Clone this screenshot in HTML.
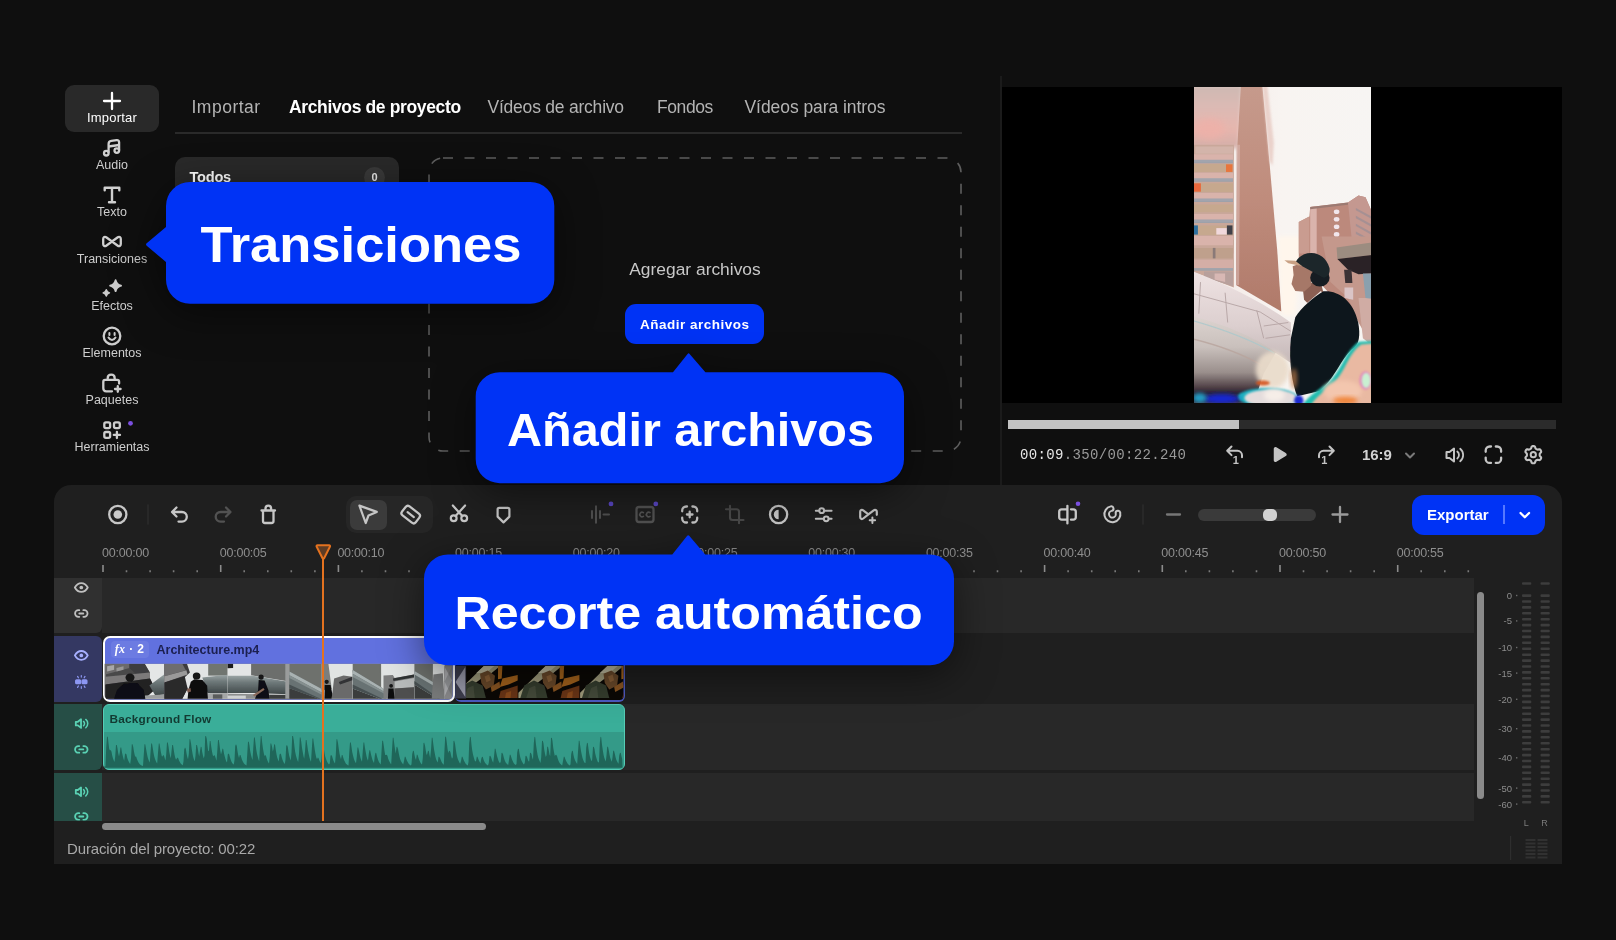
<!DOCTYPE html>
<html lang="es">
<head>
<meta charset="utf-8">
<title>Editor de vídeo</title>
<style>
*{box-sizing:border-box;margin:0;padding:0}
html,body{width:1616px;height:940px;overflow:hidden;background:#0f0f0f}
body{font-family:"Liberation Sans",sans-serif;color:#cfcfcf;position:relative}
.abs{position:absolute}
#root{position:absolute;left:0;top:0;width:1616px;height:940px;will-change:transform;transform:translateZ(0)}
svg{display:block;overflow:visible}
/* sidebar */
.sb{position:absolute;left:52px;width:120px;text-align:center;font-size:12.5px;color:#cecece;line-height:14px;white-space:nowrap}
.sb svg{margin:0 auto}
#imp{position:absolute;left:65px;top:85px;width:94px;height:47px;border-radius:9px;background:#292929}
/* tabs */
.tab{position:absolute;top:96.700px;font-size:17.500px;line-height:20px;color:#b4b4b4;white-space:nowrap}
.tab.on{color:#fff;font-weight:bold}
#tabline{position:absolute;left:175px;top:132.200px;width:787px;height:1.600px;background:#2a2a2a}
#todos{position:absolute;left:175px;top:157px;width:224px;height:40px;border-radius:10px;background:#292929}
#todos b{position:absolute;left:14.500px;top:11.500px;font-size:14.600px;letter-spacing:-.25px;color:#fff}
#todos i{position:absolute;right:14px;top:9.500px;width:21px;height:21px;border-radius:50%;background:#3a3a3a;font-style:normal;font-weight:bold;font-size:11px;color:#eee;text-align:center;line-height:21px}
#agregar{position:absolute;left:428px;width:534px;top:258.600px;text-align:center;font-size:17.400px;line-height:20px;color:#c8c8c8}
#addbtn{position:absolute;left:625.400px;top:304px;width:138.600px;height:40px;border-radius:11px;background:#0033f5;color:#fff;font-weight:bold;font-size:13.500px;letter-spacing:.5px;text-align:center;line-height:41px}
/* callouts */
.co{position:absolute;background:#0033f5;border-radius:24px;color:#fff;font-weight:bold;text-align:center;white-space:nowrap}
/* preview */
#pv{position:absolute;left:1002px;top:87px;width:560px;height:316px;background:#000}
#pbar{position:absolute;left:1008px;top:419.600px;width:548px;height:9.400px;background:#2b2b2b}
#pbar div{width:231px;height:9.400px;background:#c2c2c2}
#tc{position:absolute;left:1020px;top:447px;font-family:"Liberation Mono",monospace;font-size:14px;line-height:16px;color:#9a9a9a;white-space:nowrap;letter-spacing:.35px}
#tc b{color:#e6e6e6;font-weight:normal}
/* timeline */
#tl{position:absolute;left:54px;top:484.600px;width:1508px;height:379.400px;background:#1f1f1f;border-radius:17px 17px 0 0}
.rl{position:absolute;top:546.300px;font-size:12.500px;line-height:14px;color:#8e8e8e;white-space:nowrap;letter-spacing:-.22px}
.trk{position:absolute;left:102px;width:1372px;background:#282828}
.th{position:absolute;left:54px;width:48px}
</style>
</head>
<body>
<div id="root">
<!-- SIDEBAR -->
<div id="imp"></div>
<div id="sidebar">
<div class="sb" style="top:92px;color:#fff"><svg width="18" height="18" viewBox="0 0 18 18"><path d="M9 1v16M1 9h16" stroke="#fff" stroke-width="2.3" stroke-linecap="round" fill="none"/></svg><div style="margin-top:1px;font-size:13px;letter-spacing:.2px">Importar</div></div>
<div class="sb" style="top:139px"><svg width="20" height="18" viewBox="0 0 20 18"><g fill="none" stroke="#d0d0d0" stroke-width="2.300"><path d="M6.600 13.800V5c0-1.700 1-2.900 2.700-3.100l5.400-.7c1.400-.2 2.400.7 2.400 2.100v8" stroke-linejoin="round"/><path d="M6.600 7.500l10.500-1.500"/><circle cx="4.300" cy="14.200" r="2.300"/><circle cx="14.800" cy="11.600" r="2.300"/></g></svg><div style="margin-top:1px">Audio</div></div>
<div class="sb" style="top:186px"><svg width="18" height="18" viewBox="0 0 18 18"><path d="M1.700 4.200V1.700h14.600v2.500M9 1.700v14.600M6 16.300h6" fill="none" stroke="#d0d0d0" stroke-width="2.400" stroke-linecap="round" stroke-linejoin="round"/></svg><div style="margin-top:1px">Texto</div></div>
<div class="sb" style="top:235px"><svg width="20" height="13" viewBox="0 0 20 13"><path d="M10 6.500L4.200 2.300C2.800 1.300 1.200 2.200 1.200 3.900V9.100C1.200 10.800 2.800 11.700 4.200 10.700L10 6.500L15.800 2.300C17.200 1.300 18.800 2.200 18.800 3.900V9.100C18.800 10.800 17.200 11.700 15.800 10.700Z" fill="none" stroke="#d0d0d0" stroke-width="2.300" stroke-linejoin="round"/></svg><div style="margin-top:4px">Transiciones</div></div>
<div class="sb" style="top:279px"><svg width="20" height="19" viewBox="0 0 20 19"><path d="M13.600 1.200c.8 3.200 2.300 4.700 5.500 5.500-3.200.8-4.700 2.300-5.500 5.500-.8-3.200-2.300-4.700-5.500-5.500 3.200-.8 4.700-2.300 5.500-5.500z" fill="#cdcdcd" stroke="#cdcdcd" stroke-width="1.800" stroke-linejoin="round"/><path d="M4.300 10.700c.5 1.800 1.400 2.700 3.200 3.200-1.800.5-2.700 1.400-3.200 3.200-.5-1.800-1.400-2.700-3.200-3.200 1.800-.5 2.700-1.400 3.200-3.200z" fill="#cdcdcd" stroke="#cdcdcd" stroke-width="1.400" stroke-linejoin="round"/></svg><div style="margin-top:1px">Efectos</div></div>
<div class="sb" style="top:326px"><svg width="20" height="20" viewBox="0 0 20 20"><circle cx="10" cy="10" r="8.300" fill="none" stroke="#cdcdcd" stroke-width="2.300"/><path d="M7.400 7v2M12.600 7v2" stroke="#cdcdcd" stroke-width="2" stroke-linecap="round"/><path d="M6.500 11.600c.9 1.600 2.100 2.300 3.500 2.300s2.600-.7 3.500-2.300" fill="none" stroke="#cdcdcd" stroke-width="2" stroke-linecap="round"/></svg><div style="margin-top:0px">Elementos</div></div>
<div class="sb" style="top:373px"><svg width="22" height="20" viewBox="0 0 22 20"><g fill="none" stroke="#cdcdcd" stroke-width="2.300" stroke-linecap="round" stroke-linejoin="round"><path d="M11 18.300H5.300c-1.700 0-3-1.300-3-3V8.700c0-1 .8-1.800 1.800-1.800h12.200c1 0 1.800.8 1.800 1.800v1.800"/><path d="M6.700 6.500V5.200c0-2 1.500-3.500 3.500-3.500s3.500 1.500 3.500 3.500v1.300"/><path d="M16.800 13.200v5.600M14 16h5.600"/></g></svg><div style="margin-top:0px">Paquetes</div></div>
<div class="sb" style="top:420px"><svg width="20" height="20" viewBox="0 0 20 20"><g fill="none" stroke="#cdcdcd" stroke-width="2.300" stroke-linejoin="round"><rect x="2.300" y="2.300" width="5.800" height="5.800" rx="1.600"/><rect x="12" y="2.300" width="5.800" height="5.800" rx="1.600"/><rect x="2.300" y="12" width="5.800" height="5.800" rx="1.600"/><path d="M14.900 11.800v6.200M11.800 14.900h6.200" stroke-linecap="round"/></g><circle cx="28.500" cy="3.300" r="2.400" fill="#7b4fe0"/></svg><div style="margin-top:0px">Herramientas</div></div>
</div>
<!-- TABS -->
<div class="tab" style="left:191.500px;letter-spacing:.5px">Importar</div>
<div class="tab on" style="left:289px;letter-spacing:-.36px">Archivos de proyecto</div>
<div class="tab" style="left:487.500px;letter-spacing:-.22px">Vídeos de archivo</div>
<div class="tab" style="left:657px;letter-spacing:-.42px">Fondos</div>
<div class="tab" style="left:744.500px;letter-spacing:-.06px">Vídeos para intros</div>
<div id="tabline"></div>
<div id="todos"><b>Todos</b><i>0</i></div>
<svg class="abs" style="left:428px;top:157px" width="534" height="295"><rect x="1" y="1" width="532" height="293" rx="14" fill="none" stroke="#5e5e5e" stroke-width="1.600" stroke-dasharray="10 11.500"/></svg>
<div id="agregar">Agregar archivos</div>
<div id="addbtn">Añadir archivos</div>
<!-- PREVIEW -->
<div id="vsep" class="abs" style="left:1000px;top:76px;width:1.600px;height:410px;background:#1b1b1b"></div>
<div id="pv"></div>
<!--PVIMG--><svg class="abs" style="left:1194px;top:87px" width="177" height="316" viewBox="0 0 177 316">
<defs><linearGradient id="sky" x1="0" y1="0" x2="1" y2="0"><stop offset="0" stop-color="#f1e6e2"/><stop offset=".5" stop-color="#f8f4f1"/><stop offset="1" stop-color="#f7f5f3"/></linearGradient><linearGradient id="tw" x1="0" y1="0" x2="0" y2="1"><stop offset="0" stop-color="#c69a8c"/><stop offset=".5" stop-color="#bf8c7c"/><stop offset="1" stop-color="#b07a6a"/></linearGradient><linearGradient id="tl0" x1="0" y1="0" x2="0" y2="1"><stop offset="0" stop-color="#cdb9b3"/><stop offset=".35" stop-color="#dcbab4"/><stop offset=".7" stop-color="#e6b6ae"/><stop offset="1" stop-color="#d3aea8"/></linearGradient><linearGradient id="dome" x1="0" y1="0" x2="0" y2="1"><stop offset="0" stop-color="#efe3e3"/><stop offset=".6" stop-color="#dccfcf"/><stop offset="1" stop-color="#c4b8b8"/></linearGradient><linearGradient id="tube" x1="0" y1="0" x2="0" y2="1"><stop offset="0" stop-color="#ddd4d0"/><stop offset=".4" stop-color="#c9c0bc"/><stop offset=".72" stop-color="#9a8f8c"/><stop offset=".9" stop-color="#54454a"/><stop offset="1" stop-color="#3a2c38"/></linearGradient><filter id="b1" x="-30%" y="-30%" width="160%" height="160%"><feGaussianBlur stdDeviation="1"/></filter><filter id="b2" x="-30%" y="-30%" width="160%" height="160%"><feGaussianBlur stdDeviation="2"/></filter><filter id="b3" x="-30%" y="-30%" width="160%" height="160%"><feGaussianBlur stdDeviation="3.500"/></filter><filter id="bs" x="-5%" y="-5%" width="110%" height="110%"><feGaussianBlur stdDeviation=".6"/></filter><clipPath id="pc"><rect width="177" height="316"/></clipPath></defs>
<g clip-path="url(#pc)"><g filter="url(#bs)">
<rect x="-5" y="-5" width="187" height="326" fill="url(#sky)"/>
<polygon points="83.8,149.5 108.3,149.5 101.3,228.5 87.3,228.5" fill="#fff6ec" filter="url(#b2)"/>
<polygon points="-4.0,-2.0 48.7,-2.0 45.1,61.2 -4.0,61.2" fill="url(#tl0)" filter="url(#b2)"/>
<ellipse cx="15.3" cy="41.9" rx="15.8" ry="10.5" fill="#efb0a8" filter="url(#b3)" opacity=".8"/>
<polygon points="-4.0,57.7 39.9,57.7 39.9,166.5 -4.0,166.5" fill="#c9a79a" />
<polygon points="-4.0,67.3 39.0,67.3 39.0,75.2 -4.0,75.2" fill="#d9b3ab" />
<polygon points="-4.0,72.8 39.0,72.8 39.0,76.3 -4.0,76.3" fill="#8f9fae" opacity=".75"/>
<polygon points="-4.0,85.8 39.0,85.8 39.0,93.7 -4.0,93.7" fill="#d9b3ab" />
<polygon points="-4.0,91.2 39.0,91.2 39.0,94.7 -4.0,94.7" fill="#8f9fae" opacity=".75"/>
<polygon points="-4.0,106.0 39.0,106.0 39.0,113.9 -4.0,113.9" fill="#d9b3ab" />
<polygon points="-4.0,111.4 39.0,111.4 39.0,114.9 -4.0,114.9" fill="#8f9fae" opacity=".75"/>
<polygon points="-4.0,127.0 39.0,127.0 39.0,134.9 -4.0,134.9" fill="#d9b3ab" />
<polygon points="-4.0,132.5 39.0,132.5 39.0,136.0 -4.0,136.0" fill="#8f9fae" opacity=".75"/>
<polygon points="-4.0,149.0 39.0,149.0 39.0,157.7 -4.0,157.7" fill="#d9b3ab" />
<polygon points="-4.0,155.3 39.0,155.3 39.0,158.8 -4.0,158.8" fill="#8f9fae" opacity=".75"/>
<polygon points="-4.0,77.0 39.0,77.0 39.0,84.9 -4.0,84.9" fill="#c6a88e" />
<polygon points="-4.0,96.3 39.0,96.3 39.0,105.1 -4.0,105.1" fill="#c6a88e" />
<polygon points="-4.0,117.4 39.0,117.4 39.0,125.3 -4.0,125.3" fill="#c6a88e" />
<polygon points="-4.0,138.4 39.0,138.4 39.0,148.1 -4.0,148.1" fill="#c6a88e" />
<polygon points="-4.0,160.4 39.0,160.4 39.0,166.5 -4.0,166.5" fill="#c6a88e" />
<polygon points="1.3,59.4 39.0,59.4 39.0,66.8 1.3,66.8" fill="#d6b8ae" opacity=".8"/>
<polygon points="32.0,77.3 38.5,77.3 38.5,84.9 32.0,84.9" fill="#e8743c" />
<polygon points="-0.5,96.3 6.9,96.3 6.9,104.7 -0.5,104.7" fill="#e8683c" />
<polygon points="-4.0,138.4 3.9,138.4 3.9,147.6 -4.0,147.6" fill="#2f6f9f" />
<polygon points="22.3,141.1 32.9,141.1 32.9,147.6 22.3,147.6" fill="#f0d8dc" />
<polygon points="32.9,138.4 38.5,138.4 38.5,147.6 32.9,147.6" fill="#40404a" />
<polygon points="-4.0,153.0 39.9,153.0 39.9,200.4 -4.0,183.7" fill="#c9a79a" />
<polygon points="-4.0,153.0 39.0,153.0 39.0,158.3 -4.0,158.3" fill="#d9b3ab" />
<polygon points="-4.0,160.9 39.0,160.9 39.0,171.4 -4.0,171.4" fill="#bfa08c" />
<polygon points="18.8,160.9 21.5,160.9 21.5,171.4 18.8,171.4" fill="#8a7a78" />
<polygon points="-4.0,172.7 39.0,172.7 39.0,182.5 -4.0,182.5" fill="#d4aea6" />
<polygon points="-4.0,181.1 39.0,181.1 39.0,183.7 -4.0,183.7" fill="#8f9fae" opacity=".7"/>
<polygon points="10.0,184.6 39.0,184.6 39.0,199.5 10.0,189.9" fill="#b8a09c" />
<polygon points="20.6,186.4 31.1,186.4 31.1,195.1 20.6,192.5" fill="#d8b8b4" />
<polygon points="46.9,-2.0 68.3,-2.0 75.3,73.5 83.2,163.0 87.3,224.4 42.0,198.1 42.0,163.0 43.4,57.7" fill="url(#tw)" />
<polygon points="68.3,-2.0 73.2,-2.0 79.9,55.9 78.5,78.7 75.3,73.5" fill="#e6c8c0" filter="url(#b1)" opacity=".75"/>
<polygon points="42.0,57.7 46.0,57.7 45.1,198.1 42.0,198.1" fill="#d8b8b0" opacity=".6"/>
<polygon points="104.8,134.9 115.4,129.6 116.2,120.0 154.0,115.6 164.5,108.6 171.5,110.3 177.7,124.4 177.7,243.7 154.0,226.2 104.8,173.5" fill="#bc897c" />
<polygon points="116.2,120.0 122.7,119.1 122.7,166.5 116.2,166.5" fill="#dab4ac" />
<polygon points="104.8,134.9 115.4,129.6 115.4,166.5 104.8,166.5" fill="#c99c90" />
<polygon points="154.0,115.6 164.5,108.6 171.5,110.3 177.7,124.4 177.7,166.5 159.2,166.5" fill="#c49890" />
<polygon points="116.2,120.0 154.0,115.6 154.0,117.7 116.2,122.3" fill="#9c7a72" />
<ellipse cx="142.6" cy="124.7" rx="2.8" ry="2.3" fill="#f1e6ec" />
<ellipse cx="142.6" cy="132.3" rx="2.8" ry="2.3" fill="#f1e6ec" />
<ellipse cx="142.6" cy="139.8" rx="2.8" ry="2.3" fill="#f1e6ec" />
<ellipse cx="142.6" cy="147.4" rx="2.8" ry="2.3" fill="#f1e6ec" />
<ellipse cx="142.6" cy="154.6" rx="2.8" ry="2.3" fill="#f1e6ec" />
<polygon points="161.9,120.9 177.7,129.6 177.7,132.1 161.9,123.3" fill="#8e8a96" opacity=".55"/>
<polygon points="161.9,128.8 177.7,137.5 177.7,140.0 161.9,131.2" fill="#8e8a96" opacity=".55"/>
<polygon points="161.9,136.7 177.7,145.4 177.7,147.9 161.9,139.1" fill="#8e8a96" opacity=".55"/>
<polygon points="161.9,144.6 177.7,153.3 177.7,155.8 161.9,147.0" fill="#8e8a96" opacity=".55"/>
<polygon points="161.9,152.5 177.7,161.2 177.7,163.7 161.9,154.9" fill="#8e8a96" opacity=".55"/>
<polygon points="127.6,149.5 177.7,149.5 177.7,258.3 164.5,235.5 154.0,210.9 136.4,195.1" fill="#c4988c" />
<polygon points="164.5,210.9 177.7,210.9 177.7,258.3 168.9,251.3" fill="#d0aca4" />
<polygon points="142.6,160.4 177.7,155.6 177.7,167.9 143.4,172.0" fill="#9c8c80" />
<polygon points="143.4,172.0 177.7,167.9 177.7,186.4 164.5,187.2 154.0,182.8" fill="#2a2428" />
<polygon points="150.1,182.8 157.5,182.8 158.4,196.0 151.3,196.0" fill="#3a3034" />
<polygon points="168.9,186.4 177.7,186.4 177.7,211.8 171.5,210.9" fill="#8aa0ae" />
<polygon points="150.5,200.4 159.2,200.4 159.2,212.7 150.5,210.9" fill="#e0d0d4" opacity=".8"/>
</g>
<g filter="url(#bs)">
<path d="M-4.0 183.2C22.3 193.4 62.7 210.9 96.9 235.5L96.9 275.9 82.0 266.2 -4.0 230.2Z" fill="url(#dome)" />
<path d="M-4.0 205.7L66.2 225.0" stroke="#b9a8a8" stroke-width="1" fill="none"/>
<path d="M66.2 225.0L96.9 244.3" stroke="#b9a8a8" stroke-width="1" fill="none"/>
<path d="M62.7 223.2L69.7 251.3" stroke="#b9a8a8" stroke-width="1" fill="none"/>
<path d="M31.1 205.7L33.7 235.5" stroke="#b9a8a8" stroke-width="1" fill="none"/>
<path d="M69.7 239.0L94.3 235.5" stroke="#b9a8a8" stroke-width="1" fill="none"/>
<path d="M71.5 251.3L96.1 247.8" stroke="#b9a8a8" stroke-width="1" fill="none"/>
<path d="M6.5 195.1L4.8 226.7" stroke="#b9a8a8" stroke-width="1" fill="none"/>
<path d="M-4.0 228.5C31.1 237.3 62.7 251.3 82.0 265.3L69.7 286.4 62.7 307.5 -4.0 307.5Z" fill="url(#tube)" />
<path d="M-4.0 232.9Q48.7 247.8 80.3 266.2" stroke="#a8c8cc" stroke-width="1.200" fill="none" opacity=".8"/>
<path d="M-4.0 251.3Q39.9 261.8 69.7 279.4" stroke="#b8a49c" stroke-width="1.500" fill="none" opacity=".8"/>
<polygon points="-4.0,304.0 69.7,304.0 69.7,318.0 -4.0,318.0" fill="#2a2030" filter="url(#b2)"/>
</g>
<g filter="url(#bs)">
<polygon points="108.3,196.9 126.8,195.1 129.4,205.7 115.4,217.9 110.1,212.7" fill="#8b5f52" />
<polygon points="98.7,179.3 108.3,175.8 118.9,182.8 117.1,198.6 110.1,204.8 101.3,203.9 97.5,196.9 99.6,188.1" fill="#a67868" />
<polygon points="111.9,217.1 126.8,203.9 129.4,206.5 114.5,220.6" fill="#efe6e2" />
<path d="M101.3 230.2C108.3 219.7 118.9 210.9 129.4 204.3C143.4 203.0 159.2 212.7 164.2 235.5C166.3 247.8 165.9 258.3 157.5 262.7C147.0 272.4 141.7 289.9 125.9 304.0L103.1 309.2C98.7 296.9 94.3 275.9 96.9 251.3Z" fill="#10151a" />
<ellipse cx="125.9" cy="190.7" rx="9.7" ry="8.8" fill="#181c20" />
<path d="M101.3 176.7C104.8 163.5 129.4 160.0 135.5 181.1C136.4 187.2 132.9 190.7 129.4 190.7L108.3 179.3Z" fill="#1b262b" />
<polygon points="90.4,173.2 101.3,173.7 108.3,179.3 94.3,176.2" fill="#c9a184" />
</g>
<ellipse cx="78.5" cy="282.9" rx="16.7" ry="18.4" fill="#eadccb" filter="url(#b2)" opacity=".93"/>
<ellipse cx="68.8" cy="296.1" rx="7.0" ry="2.5" fill="#d4521e" filter="url(#b1)" opacity=".9"/>
<ellipse cx="99.9" cy="291.7" rx="3.2" ry="10.5" fill="#c8804a" filter="url(#b2)" opacity=".7"/>
<path d="M178.6 253.9L164.5 254.8C150.5 265.3 148.7 281.1 136.4 293.4C125.9 302.2 115.4 307.5 108.3 318.0L178.6 318.0Z" fill="#22bdb0" filter="url(#b1)"/>
<path d="M178.6 256.6L167.1 257.6C154.0 267.1 152.2 282.9 140.3 295.5C131.2 304.0 122.4 309.2 117.1 318.0L178.6 318.0Z" fill="#e9b9a2" filter="url(#b1)"/>
<ellipse cx="148.7" cy="304.0" rx="19.3" ry="10.5" fill="#f3c6ae" filter="url(#b2)"/>
<ellipse cx="151.3" cy="313.6" rx="12.3" ry="3.9" fill="#f07a28" filter="url(#b2)" opacity=".85"/>
<ellipse cx="171.5" cy="293.4" rx="6.0" ry="9.1" fill="#e070c8" filter="url(#b1)" opacity=".7"/>
<ellipse cx="172.1" cy="293.4" rx="4.6" ry="7.7" fill="#c9f0d2" filter="url(#b1)"/>
<ellipse cx="73.2" cy="310.1" rx="29.8" ry="9.1" fill="#1fb0c0" filter="url(#b1)"/>
<ellipse cx="76.7" cy="311.0" rx="26.3" ry="8.4" fill="#e4dcdc" filter="url(#b1)"/>
<ellipse cx="80.3" cy="308.3" rx="10.5" ry="6.3" fill="#f6eee8" filter="url(#b2)"/>
<ellipse cx="104.8" cy="313.6" rx="4.6" ry="5.3" fill="#1a2ad0" filter="url(#b1)"/>
<ellipse cx="27.6" cy="311.9" rx="17.6" ry="4.9" fill="#1626d2" filter="url(#b2)"/>
<ellipse cx="5.7" cy="311.0" rx="7.0" ry="4.9" fill="#229cc4" filter="url(#b2)"/>
</g></svg><!--/PVIMG-->
<div id="pbar"><div></div></div>
<div id="tc"><b>00:09</b>.350/00:22.240</div>
<!-- PREVIEW CONTROLS -->
<div class="abs" style="left:1362px;top:445px;font-size:15px;line-height:20px;font-weight:bold;color:#d2d2d2;letter-spacing:-.1px">16:9</div>
<svg class="abs" style="left:1210px;top:435px" width="350" height="40" fill="none" stroke="#c4c4c4" stroke-width="2" stroke-linecap="round" stroke-linejoin="round" font-family="'Liberation Sans',sans-serif">
<path d="M21.500 11.500l-4.300 4.300 4.300 4.300M17.500 15.800h10a4.500 4.500 0 0 1 4.500 4.500v2"/>
<text x="22.800" y="29" font-size="11" font-weight="bold" fill="#c4c4c4" stroke="none">1</text>
<path d="M64.500 13.800v11.400a1 1 0 0 0 1.500.9l9.400-5.700a1 1 0 0 0 0-1.800l-9.400-5.700a1 1 0 0 0-1.500.9z" fill="#c4c4c4" stroke-width="1.500"/>
<path d="M119.500 11.500l4.300 4.300-4.300 4.300M123.500 15.800h-10a4.500 4.500 0 0 0-4.500 4.500v2"/>
<text x="111.200" y="29" font-size="11" font-weight="bold" fill="#c4c4c4" stroke="none">1</text>
<path d="M196 18.500l4 4 4-4" stroke="#7a7a7a"/>
<path d="M236.500 17h3l4.500-3.500v13l-4.500-3.500h-3z"/><path d="M247.300 16.500a4.500 4.500 0 0 1 0 7M250.200 13.800a8 8 0 0 1 0 12.400" stroke-width="1.800"/>
<path d="M275.700 16.800v-1.300a4 4 0 0 1 4-4h1.300M285.800 11.500h1.300a4 4 0 0 1 4 4v1.300M291.100 22.600v1.300a4 4 0 0 1-4 4h-1.300M281 27.900h-1.300a4 4 0 0 1-4-4v-1.300" stroke-width="2.300"/>
<g transform="translate(323.300 19.700)"><path d="M0.00 -8.61L0.56 -8.58L1.11 -8.45L1.61 -8.08L1.94 -7.24L2.17 -6.40L2.48 -5.99L2.83 -5.75L3.20 -5.54L3.56 -5.33L3.94 -5.14L4.46 -5.08L5.30 -5.30L6.20 -5.43L6.76 -5.19L7.15 -4.77L7.46 -4.30L7.71 -3.80L7.87 -3.26L7.80 -2.65L7.24 -1.94L6.63 -1.32L6.42 -0.85L6.39 -0.42L6.39 -0.00L6.39 0.42L6.42 0.85L6.63 1.32L7.24 1.94L7.80 2.65L7.87 3.26L7.71 3.80L7.46 4.30L7.15 4.77L6.76 5.19L6.20 5.43L5.30 5.30L4.46 5.08L3.94 5.14L3.56 5.33L3.20 5.54L2.83 5.75L2.48 5.99L2.17 6.40L1.94 7.24L1.61 8.08L1.11 8.45L0.56 8.58L0.00 8.61L-0.56 8.58L-1.11 8.45L-1.61 8.08L-1.94 7.24L-2.17 6.40L-2.48 5.99L-2.83 5.75L-3.20 5.54L-3.56 5.33L-3.94 5.14L-4.46 5.08L-5.30 5.30L-6.20 5.43L-6.76 5.19L-7.15 4.77L-7.46 4.30L-7.71 3.80L-7.87 3.26L-7.80 2.65L-7.24 1.94L-6.63 1.32L-6.42 0.85L-6.39 0.42L-6.39 0.00L-6.39 -0.42L-6.42 -0.85L-6.63 -1.32L-7.24 -1.94L-7.80 -2.65L-7.87 -3.26L-7.71 -3.80L-7.46 -4.30L-7.15 -4.77L-6.76 -5.19L-6.20 -5.43L-5.30 -5.30L-4.46 -5.08L-3.94 -5.14L-3.56 -5.33L-3.20 -5.54L-2.83 -5.75L-2.48 -5.99L-2.17 -6.40L-1.94 -7.24L-1.61 -8.08L-1.11 -8.45L-0.56 -8.58Z" stroke-width="2.100"/><circle r="2.600" stroke-width="2"/></g>
</svg>
<!-- TIMELINE -->
<div id="tl"></div>
<div class="rl" style="left:102.0px">00:00:00</div><div class="rl" style="left:219.7px">00:00:05</div><div class="rl" style="left:337.4px">00:00:10</div><div class="rl" style="left:455.1px">00:00:15</div><div class="rl" style="left:572.8px">00:00:20</div><div class="rl" style="left:690.5px">00:00:25</div><div class="rl" style="left:808.2px">00:00:30</div><div class="rl" style="left:925.9px">00:00:35</div><div class="rl" style="left:1043.6px">00:00:40</div><div class="rl" style="left:1161.3px">00:00:45</div><div class="rl" style="left:1279.0px">00:00:50</div><div class="rl" style="left:1396.7px">00:00:55</div><svg class="abs" style="left:0;top:560px" width="1616" height="16"><path d="M103.0 5v7M220.7 5v7M338.4 5v7M456.1 5v7M573.8 5v7M691.5 5v7M809.2 5v7M926.9 5v7M1044.6 5v7M1162.3 5v7M1280.0 5v7M1397.7 5v7" stroke="#8c8c8c" stroke-width="1.6" fill="none"/><path d="M126.5 10.3v2M150.1 10.3v2M173.6 10.3v2M197.2 10.3v2M244.2 10.3v2M267.8 10.3v2M291.3 10.3v2M314.9 10.3v2M361.9 10.3v2M385.5 10.3v2M409.0 10.3v2M432.6 10.3v2M479.6 10.3v2M503.2 10.3v2M526.7 10.3v2M550.3 10.3v2M597.3 10.3v2M620.9 10.3v2M644.4 10.3v2M668.0 10.3v2M715.0 10.3v2M738.6 10.3v2M762.1 10.3v2M785.7 10.3v2M832.7 10.3v2M856.3 10.3v2M879.8 10.3v2M903.4 10.3v2M950.4 10.3v2M974.0 10.3v2M997.5 10.3v2M1021.1 10.3v2M1068.1 10.3v2M1091.7 10.3v2M1115.2 10.3v2M1138.8 10.3v2M1185.8 10.3v2M1209.4 10.3v2M1232.9 10.3v2M1256.5 10.3v2M1303.5 10.3v2M1327.1 10.3v2M1350.6 10.3v2M1374.2 10.3v2M1421.2 10.3v2M1444.8 10.3v2M1468.3 10.3v2" stroke="#7a7a7a" stroke-width="1.6" fill="none"/></svg>
<!-- TOOLBAR -->
<div class="abs" style="left:346px;top:496px;width:87px;height:37px;border-radius:10px;background:#262626"></div>
<div class="abs" style="left:349.500px;top:499.500px;width:37px;height:30px;border-radius:7px;background:#3b3b3b"></div>
<div class="abs" style="left:1198px;top:508.500px;width:117.500px;height:12px;border-radius:6px;background:#3a3a3a"></div>
<div class="abs" style="left:1262.500px;top:508.500px;width:14.500px;height:12px;border-radius:5px;background:#d2d2d2"></div>
<div class="abs" style="left:1412px;top:495px;width:133px;height:39.500px;border-radius:12px;background:#0033f5"></div>
<div class="abs" style="left:1427px;top:505px;font-size:15px;line-height:20px;font-weight:bold;color:#fff;letter-spacing:0">Exportar</div>
<div class="abs" style="left:1503px;top:505px;width:1.500px;height:19px;background:#5578ff"></div>
<svg class="abs" style="left:0;top:490px" width="1616" height="50" fill="none" stroke="#c6c6c6" stroke-width="2.300" stroke-linecap="round" stroke-linejoin="round">
<!-- record -->
<circle cx="117.800" cy="24.500" r="8.600"/><circle cx="117.800" cy="24.500" r="4.300" fill="#c9c9c9" stroke="none"/>
<path d="M148 15v19M1143 15v19" stroke="#2d2d2d" stroke-width="1.500"/>
<!-- undo -->
<path d="M176.500 17.500l-4.500 4.500 4.500 4.500M172.500 22h9.500a4.800 4.800 0 0 1 0 9.600h-3.500"/>
<!-- redo -->
<path d="M226 17.500l4.500 4.500-4.500 4.500M230 22h-9.500a4.800 4.800 0 0 0 0 9.600h3.500" stroke="#525252"/>
<!-- trash -->
<path d="M261.500 20.500h13.500M265.500 20v-1.500a2.800 2.800 0 0 1 5.600 0V20M263 21v10a2 2 0 0 0 2 2h6.500a2 2 0 0 0 2-2V21"/>
<!-- cursor -->
<path d="M359.400 15.600L376.800 21.900L368.500 25.500L365.700 33z" stroke-width="2.200"/>
<!-- blade -->
<g transform="rotate(38 410.700 24.600)" stroke-width="2.200"><rect x="402" y="18.900" width="17.400" height="11.400" rx="2.800"/><path d="M406.700 24.600h8"/></g>
<!-- scissors -->
<g stroke-width="2.200"><circle cx="453.700" cy="28.200" r="2.900"/><circle cx="464.200" cy="28.200" r="2.900"/><path d="M452.800 15.500L462.300 26M465.100 15.500L455.600 26"/></g>
<!-- marker -->
<path d="M499.200 17.800h8.600a1.600 1.600 0 0 1 1.600 1.600v7.200l-5.900 5.800-5.900-5.800v-7.200a1.600 1.600 0 0 1 1.600-1.600z" stroke-width="2.200"/>
<!-- waveform dim -->
<g stroke="#505050" stroke-width="2"><path d="M592 21v7M596 16.200v16.600M600 21v7M603.500 24.500h5.500"/></g>
<!-- cc dim -->
<g stroke="#525252"><rect x="636.500" y="17" width="17" height="15" rx="2.500"/><path d="M643.400 22.600a2.300 2.300 0 1 0 0 3.800M650 22.600a2.300 2.300 0 1 0 0 3.800" stroke-width="1.700"/></g>
<!-- autocrop -->
<path d="M682.200 21.300v-.8a4 4 0 0 1 4-4h.8M692.400 16.500h.8a4 4 0 0 1 4 4v.8M697.200 27.700v.8a4 4 0 0 1-4 4h-.8M687 32.500h-.8a4 4 0 0 1-4-4v-.8M689.700 21.700v5.600M686.900 24.500h5.600"/>
<!-- crop dim -->
<path d="M730 15.800v11.700a2.500 2.500 0 0 0 2.500 2.500h11M726 19.300h10.500a2.500 2.500 0 0 1 2.500 2.500v11.400" stroke="#494949" stroke-width="2.100"/>
<!-- contrast -->
<circle cx="778.600" cy="24.500" r="8.600"/><path d="M778.600 19.700a4.800 4.800 0 0 0 0 9.600z" fill="#c9c9c9" stroke="none"/>
<!-- sliders -->
<g stroke-width="2"><path d="M815.800 20.700h3.400M824.200 20.700h7.400M815.800 28.800h7.800M828.700 28.800h2.900"/><circle cx="821.700" cy="20.700" r="2.400"/><circle cx="826.200" cy="28.800" r="2.400"/></g>
<!-- transition wizard -->
<path d="M868.400 24.400L863.200 20.300C861.800 19.200 860.200 20 860.200 21.800V27C860.200 28.800 861.800 29.600 863.200 28.500L868.400 24.400L873.700 20.300C875.100 19.200 876.800 20 876.800 21.800V24.800" stroke-width="2.200"/><path d="M872.400 27.600v5.400M869.700 30.300h5.400" stroke-width="2"/>
<!-- split icon -->
<path d="M1067.400 19.300h-5.700a2.500 2.500 0 0 0-2.500 2.500v5.400a2.500 2.500 0 0 0 2.500 2.500h5.700M1067.400 15.800v17.600M1071 19.300h2.300a2.500 2.500 0 0 1 2.500 2.500v5.400a2.500 2.500 0 0 1-2.500 2.500H1071"/>
<!-- clip link -->
<g transform="rotate(-12 1112.400 24.200)"><path d="M1112.400 16.200A8 8 0 1 0 1120.400 24.200A2.300 2.300 0 0 0 1115.800 24.200A3.400 3.400 0 1 1 1112.400 20.800A2.300 2.300 0 0 0 1112.400 16.200Z" stroke-width="2"/></g>
<!-- minus plus -->
<path d="M1167 24.500h13" stroke="#777"/><path d="M1332.500 24.500h15M1340 17v15" stroke="#9a9a9a"/>
<!-- chevron -->
<path d="M1520.500 23l4.300 4.300 4.300-4.300" stroke="#fff" stroke-width="2.300"/>
<!-- purple dots -->
<g stroke="none"><circle cx="611" cy="13.900" r="2.400" fill="#5a47c4"/><circle cx="655.800" cy="13.900" r="2.400" fill="#5a47c4"/><circle cx="1078" cy="13.800" r="2.300" fill="#7a4fe0"/></g>
</svg>
<!-- tracks -->
<div class="trk" style="top:578px;height:55px"></div>
<div class="trk" style="top:633px;height:71px;background:#1f1f1f"></div>
<div class="trk" style="top:704px;height:66px"></div>
<div class="trk" style="top:773px;height:48px"></div>
<div class="th" style="top:578px;height:55px;background:#303030;border-radius:0 0 6px 0"></div>
<div class="th" style="top:636px;height:66px;background:#343862;border-radius:0 6px 6px 0"></div>
<div class="th" style="top:704px;height:66px;background:#264e46;border-radius:0 0 6px 0"></div>
<div class="th" style="top:773px;height:48px;background:#264e46"></div>
<div class="abs" style="left:54px;top:821px;width:1508px;height:43px;background:#1f1f1f"></div>
<!-- TRACK ICONS -->
<svg class="abs" style="left:0;top:0" width="110" height="821" viewBox="0 0 110 821" fill="none" stroke-width="2" stroke-linecap="round" stroke-linejoin="round">
<g transform="translate(81.300 587.5) scale(0.92) translate(-81.300 -587.5)"><g stroke="#c0c0c0"><path d="M74.300 587.5c1.800-3.300 4.200-4.800 7-4.800s5.200 1.500 7 4.800c-1.800 3.300-4.200 4.800-7 4.800s-5.200-1.500-7-4.800z"/><circle cx="81.300" cy="587.5" r="2" fill="#c0c0c0" stroke="none"/></g></g><g transform="translate(81.300 613.5) scale(0.88) translate(-81.300 -613.5)"><g stroke="#c0c0c0"><path d="M79 609.7h-1a3.800 3.800 0 0 0 0 7.600h1M83.600 609.7h1a3.800 3.800 0 0 1 0 7.600h-1M79 613.5h4.600"/></g></g>
<g transform="translate(81.300 655.4) scale(0.92) translate(-81.300 -655.4)"><g stroke="#a7b0ff"><path d="M74.300 655.4c1.800-3.300 4.200-4.800 7-4.800s5.200 1.500 7 4.800c-1.800 3.300-4.200 4.800-7 4.800s-5.200-1.500-7-4.800z"/><circle cx="81.300" cy="655.4" r="2" fill="#a7b0ff" stroke="none"/></g></g>
<g stroke="#8d97f2" stroke-width="1.500"><rect x="75.800" y="680" width="4.600" height="3.600" rx=".8" fill="#8d97f2"/><rect x="82.200" y="680" width="4.600" height="3.600" rx=".8" fill="#8d97f2"/><path d="M81.300 675.500v1.600M81.300 686.700v1.600M77.600 676.400l.8 1.400M85 676.400l-.8 1.400M77.600 687.400l.8-1.400M85 687.400l-.8-1.400" stroke-width="1.200"/></g>
<g transform="translate(81.300 723.6) scale(0.9) translate(-81.300 -723.6)"><g stroke="#5ad2b4"><path d="M75.200 721.6h2.300l3.500-2.800v9.600l-3.500-2.800h-2.300z"/><path d="M83.800 721.2a3.200 3.200 0 0 1 0 4.800M86.300 719.0a6 6 0 0 1 0 9.200" stroke-width="1.700"/></g></g><g transform="translate(81.300 749.4) scale(0.88) translate(-81.300 -749.4)"><g stroke="#5ad2b4"><path d="M79 745.6h-1a3.800 3.800 0 0 0 0 7.600h1M83.600 745.6h1a3.800 3.800 0 0 1 0 7.600h-1M79 749.4h4.600"/></g></g>
<g transform="translate(81.300 791.8) scale(0.9) translate(-81.300 -791.8)"><g stroke="#5ad2b4"><path d="M75.200 789.8h2.300l3.500-2.800v9.600l-3.500-2.800h-2.300z"/><path d="M83.800 789.4a3.200 3.200 0 0 1 0 4.800M86.300 787.2a6 6 0 0 1 0 9.200" stroke-width="1.700"/></g></g><g><clipPath id="t4c"><rect x="54" y="773" width="48" height="47.500"/></clipPath><g clip-path="url(#t4c)"><g transform="translate(81.300 816.5) scale(0.88) translate(-81.300 -816.5)"><g stroke="#5ad2b4"><path d="M79 812.7h-1a3.800 3.800 0 0 0 0 7.600h1M83.600 812.7h1a3.800 3.800 0 0 1 0 7.600h-1M79 816.5h4.600"/></g></g></g></g>
</svg>
<!-- clips -->
<div id="clip2" class="abs" style="left:455px;top:636px;width:170px;height:66px;border-radius:6px;background:#4d5bc4;overflow:hidden"></div>
<div id="clip1" class="abs" style="left:102.500px;top:635.500px;width:352px;height:66.500px;border-radius:7px;background:#6171df;border:2px solid #fff;overflow:hidden"><div class="abs" style="left:52px;top:5px;font-size:12.500px;font-weight:bold;color:#1c2050;line-height:14px;white-space:nowrap">Architecture.mp4</div><div class="abs" style="left:6px;top:3.500px;width:38px;height:17px;border-radius:4px;background:#6c7be2;color:#fff;font-size:12px;font-weight:bold;line-height:17px;text-align:center;white-space:nowrap;letter-spacing:.4px"><i style="font-family:'Liberation Serif',serif">fx</i> · 2</div></div>
<div id="aclip" class="abs" style="left:103px;top:704px;width:521.500px;height:66px;border-radius:6px;background:#3aae99;border:1.500px solid #55cdb6;overflow:hidden"><div class="abs" style="left:0;top:27px;width:523px;height:40px;background:#349a88"></div><div class="abs" style="left:5.500px;top:6.500px;font-size:11.800px;font-weight:bold;color:#123a32;line-height:14px;white-space:nowrap;letter-spacing:.2px">Background Flow</div></div>
<!--THUMBS--><svg class="abs" style="left:0;top:0" width="700" height="705"><defs><clipPath id="c1c"><path d="M104.500 663.800H452.500V695a4.500 4.500 0 0 1-4.500 4.500H109a4.500 4.500 0 0 1-4.500-4.500z"/></clipPath><clipPath id="c2c"><path d="M455.500 664H623.500V696a4 4 0 0 1-4 4H459.500a4 4 0 0 1-4-4z"/></clipPath><linearGradient id="pipe" x1="0" y1="0" x2="0" y2="1"><stop offset="0" stop-color="#9aa4a4"/><stop offset=".35" stop-color="#6f7a7b"/><stop offset="1" stop-color="#3f4748"/></linearGradient><linearGradient id="pipe2" x1=".62" y1="0" x2=".3" y2="1"><stop offset="0" stop-color="#bcc4c4"/><stop offset=".3" stop-color="#8a9494"/><stop offset=".65" stop-color="#566061"/><stop offset="1" stop-color="#343b3c"/></linearGradient><filter id="tb" x="-5%" y="-5%" width="110%" height="110%"><feGaussianBlur stdDeviation=".55"/></filter></defs>
<g clip-path="url(#c1c)"><g filter="url(#tb)">
<rect x="100" y="660" width="360" height="45" fill="#7b7d7d"/>
<polygon points="105.3,663.8 164.1,663.8 164.1,698.7 105.3,698.7" fill="#e4e6e6" />
<polygon points="105.3,663.8 144.7,663.8 150.0,672.6 150.0,678.5 155.3,689.1 144.7,698.7 105.3,698.7" fill="#4a494a" />
<polygon points="105.3,663.8 129.4,663.8 129.4,667.9 105.3,674.4" fill="#6c6b6b" />
<polygon points="107.1,666.2 114.1,665.0 114.1,669.7 107.1,671.5" fill="#a9a8a8" />
<polygon points="116.5,667.9 123.5,666.2 123.5,669.7 116.5,671.5" fill="#989797" />
<polygon points="129.4,663.8 144.7,663.8 149.4,672.6 135.3,673.8 129.4,667.9" fill="#3e3e40" />
<polygon points="105.3,676.8 150.0,672.6 150.0,678.5 105.3,684.4" fill="#7b7a7a" />
<polygon points="105.3,684.4 150.0,678.5 155.3,689.1 144.7,698.7 105.3,698.7" fill="#232224" />
<polygon points="149.4,685.6 164.1,674.4 164.1,694.4 155.3,695.6" fill="url(#pipe)" />
<polygon points="144.7,695.6 164.1,694.4 164.1,698.7 144.7,698.7" fill="#9c9e9e" />
<ellipse cx="130.0" cy="677.6" rx="4.5" ry="4.0" fill="#121214" />
<polygon points="114.1,698.7 117.0,689.7 124.1,683.2 137.6,683.0 143.7,689.7 145.3,698.7" fill="#0f0f12" />
<polygon points="164.4,663.8 227.6,663.8 227.6,698.7 164.4,698.7" fill="#e2e4e4" />
<polygon points="164.4,663.8 187.0,663.8 189.9,672.6 182.9,679.1 187.6,688.5 182.3,698.7 164.4,698.7" fill="#3c3b3d" />
<polygon points="164.4,663.8 182.3,663.8 185.8,670.3 164.4,676.2" fill="#6e6d6e" />
<polygon points="164.4,676.2 186.4,670.3 187.6,674.4 164.4,682.6" fill="#9a9999" />
<polygon points="164.4,682.6 184.7,676.2 187.6,688.5 182.3,698.7 164.4,698.7" fill="#2a292b" />
<polygon points="208.2,663.8 227.6,663.8 227.6,675.6 208.2,675.6" fill="#70746f" />
<polygon points="202.3,677.6 227.6,674.8 227.6,693.2 207.6,693.2" fill="url(#pipe)" />
<polygon points="207.6,693.8 227.6,693.2 227.6,698.7 207.6,698.7" fill="#a4a6a6" />
<polygon points="212.9,694.4 222.3,694.4 222.3,698.7 212.9,698.7" fill="#5a5c5c" />
<ellipse cx="196.6" cy="675.9" rx="3.8" ry="3.5" fill="#121214" />
<polygon points="187.6,698.7 188.4,690.3 190.8,681.8 194.3,679.2 202.5,679.9 207.2,685.8 207.9,698.7" fill="#0e0e11" />
<polygon points="186.8,689.1 190.5,687.9 191.1,691.4 187.6,692.4" fill="#7d5a4e" />
<polygon points="227.6,663.8 295.2,663.8 295.2,698.7 227.6,698.7" fill="#e3e5e5" />
<polygon points="227.6,663.8 233.1,663.8 233.1,667.9 227.6,668.2" fill="#1c1c1e" />
<polygon points="251.1,663.8 295.2,663.8 295.2,682.6 251.1,675.2" fill="#6c6e6c" />
<polygon points="227.6,675.7 252.9,675.7 295.2,683.0 295.2,694.4 252.9,692.9 227.6,692.9" fill="url(#pipe)" />
<polygon points="227.6,693.8 295.2,694.7 295.2,698.7 227.6,698.7" fill="#8c8e8e" />
<polygon points="227.6,695.6 245.8,695.6 245.8,698.7 227.6,698.7" fill="#cfd1d1" />
<polygon points="269.3,695.0 295.2,695.0 295.2,698.7 269.3,698.7" fill="#3a3c3c" />
<ellipse cx="261.1" cy="677.1" rx="2.6" ry="2.6" fill="#141416" />
<polygon points="255.0,698.7 258.1,690.3 258.7,679.9 264.6,680.5 268.4,690.3 269.5,698.7" fill="#0f0f12" />
<polygon points="252.9,695.0 263.4,687.9 264.6,689.7 254.6,696.4" fill="#8a6a5c" />
<polygon points="289.4,663.8 444.6,663.8 444.6,698.7 289.4,698.7" fill="#e1e4e3" />
<polygon points="285.3,663.8 289.4,663.8 289.4,698.7 285.3,698.7" fill="#9a9c9c" />
<polygon points="289.4,663.8 321.7,663.8 321.7,698.7 289.4,698.7" fill="#6e716d" />
<polygon points="289.4,688.2 318.8,698.7 289.4,698.7" fill="#3b3d3d" />
<polygon points="289.4,671.5 321.7,689.0 321.7,698.7 318.8,698.7 289.4,688.2" fill="#687273" />
<polygon points="289.4,671.5 321.7,689.0 321.7,692.4 289.4,675.2" fill="#a9b2b2" />
<polygon points="289.4,675.2 321.7,692.4 321.7,694.7 289.4,678.0" fill="#858f8f" />
<polygon points="289.4,684.4 320.6,698.7 318.8,698.7 289.4,688.2" fill="#475051" />
<polygon points="321.7,663.8 328.4,663.8 331.7,689.1 321.7,690.3" fill="#7c7e7c" />
<polygon points="334.1,678.5 343.5,675.6 352.3,676.8 352.3,698.7 331.7,698.7" fill="#6a6b6a" />
<polygon points="338.8,682.0 352.3,676.8 352.3,680.3 340.0,684.4" fill="#303234" />
<ellipse cx="326.7" cy="681.8" rx="2.1" ry="2.1" fill="#121214" />
<polygon points="324.4,698.7 324.7,685.0 330.6,685.0 332.3,693.8 331.7,698.7" fill="#0e0e11" />
<polygon points="352.7,663.8 381.1,663.8 381.1,687.9 352.7,672.6" fill="#6d706c" />
<polygon points="352.7,688.5 379.9,698.7 352.7,698.7" fill="#3b3d3d" />
<polygon points="352.7,670.0 383.2,688.4 386.4,698.7 379.9,698.7 352.7,688.5" fill="#687273" />
<polygon points="352.7,670.0 383.2,688.4 384.2,691.7 352.7,673.8" fill="#a9b2b2" />
<polygon points="352.7,673.8 384.2,691.7 384.9,694.0 352.7,676.9" fill="#858f8f" />
<polygon points="352.7,684.6 382.5,698.7 379.9,698.7 352.7,688.5" fill="#475051" />
<polygon points="383.5,675.6 392.9,675.0 394.6,677.9 414.0,674.4 414.0,698.7 383.5,698.7" fill="#7d7e7e" />
<polygon points="392.9,678.5 414.0,674.4 414.0,677.3 393.5,681.1" fill="#2e3032" />
<polygon points="394.6,681.5 414.0,677.9 414.0,687.3 394.6,688.5" fill="#b9bcbc" />
<polygon points="394.6,688.5 414.0,687.3 414.0,698.7 394.6,698.7" fill="#4f4f50" />
<ellipse cx="391.1" cy="685.8" rx="1.9" ry="1.9" fill="#121214" />
<polygon points="387.9,698.7 388.4,688.5 393.5,688.5 394.6,698.7" fill="#0e0e11" />
<polygon points="414.4,663.8 432.9,663.8 432.9,684.4 414.4,671.5" fill="#6d706c" />
<polygon points="414.4,684.6 437.6,698.7 414.4,698.7" fill="#3b3d3d" />
<polygon points="414.4,671.0 433.7,682.4 444.0,692.4 444.0,698.7 437.6,698.7 414.4,684.6" fill="#687273" />
<polygon points="414.4,671.0 433.7,682.4 444.0,692.4 444.0,695.6 433.7,685.8 414.4,674.5" fill="#a9b2b2" />
<polygon points="414.4,681.1 440.1,698.7 437.6,698.7 414.4,684.6" fill="#475051" />
<polygon points="433.4,674.4 442.8,673.2 444.6,698.7 431.7,698.7" fill="#7a7b7b" />
</g>
<polygon points="444.0,666.2 452.8,666.2 452.8,698.7 444.0,698.7" fill="#8d8e90" opacity=".75"/>
<polygon points="444.6,666.8 451.9,680.3 444.6,696.2" fill="#b8b9bb" opacity=".8"/>
<polygon points="451.9,666.8 451.9,696.2 444.6,681.5" fill="#5f6064" opacity=".35"/>
</g>
<g clip-path="url(#c2c)">
<rect x="455" y="660" width="170" height="45" fill="#0b0805"/>
<g filter="url(#tb)">
<polygon points="456.6,692.7 483.9,666.0 500.2,666.0 489.1,675.1 481.3,678.4 472.2,685.5 461.8,697.9 456.6,697.9" fill="#a09c7c" />
<polygon points="476.1,673.2 483.9,666.0 494.3,666.0 486.5,672.5" fill="#c4c0a4" />
<polygon points="458.6,697.9 462.5,685.5 472.2,680.6 482.6,685.5 485.9,697.9" fill="#343c2e" />
<polygon points="464.4,697.9 467.7,688.1 473.5,685.5 474.8,697.9" fill="#444c3a" />
<polygon points="480.0,673.8 487.8,670.6 495.0,675.8 493.7,685.5 485.9,689.4 481.3,682.9" fill="#6b492a" />
<polygon points="484.6,676.4 489.1,674.5 490.7,680.3 486.5,682.3" fill="#8a6038" />
<polygon points="498.0,666.0 502.4,666.0 501.7,678.4 498.0,679.3" fill="#a8661c" />
<polygon points="502.4,678.4 517.7,674.9 517.7,680.6 508.6,684.5 499.8,687.1" fill="#a5641c" />
<polygon points="490.7,686.8 499.5,681.6 500.2,687.5 491.7,692.0" fill="#8a5420" />
<polygon points="498.9,697.9 500.6,691.0 517.7,685.5 517.7,697.9" fill="#6a3413" />
<polygon points="505.0,697.9 506.0,692.7 511.2,691.0 510.6,697.9" fill="#8a4a1a" />
<polygon points="518.4,692.7 545.7,666.0 561.9,666.0 550.9,675.1 543.1,678.4 534.0,685.5 523.6,697.9 518.4,697.9" fill="#a09c7c" />
<polygon points="537.9,673.2 545.7,666.0 556.1,666.0 548.3,672.5" fill="#c4c0a4" />
<polygon points="520.3,697.9 524.2,685.5 534.0,680.6 544.4,685.5 547.6,697.9" fill="#343c2e" />
<polygon points="526.2,697.9 529.4,688.1 535.3,685.5 536.6,697.9" fill="#444c3a" />
<polygon points="541.8,673.8 549.6,670.6 556.7,675.8 555.4,685.5 547.6,689.4 543.1,682.9" fill="#6b492a" />
<polygon points="546.3,676.4 550.9,674.5 552.4,680.3 548.3,682.3" fill="#8a6038" />
<polygon points="559.7,666.0 564.1,666.0 563.5,678.4 559.7,679.3" fill="#a8661c" />
<polygon points="564.1,678.4 579.4,674.9 579.4,680.6 570.4,684.5 561.5,687.1" fill="#a5641c" />
<polygon points="552.4,686.8 561.3,681.6 561.9,687.5 553.5,692.0" fill="#8a5420" />
<polygon points="560.6,697.9 562.3,691.0 579.4,685.5 579.4,697.9" fill="#6a3413" />
<polygon points="566.7,697.9 567.8,692.7 572.9,691.0 572.3,697.9" fill="#8a4a1a" />
<polygon points="580.1,692.7 607.4,666.0 623.6,666.0 612.6,675.1 604.8,678.4 595.7,685.5 585.3,697.9 580.1,697.9" fill="#a09c7c" />
<polygon points="599.6,673.2 607.4,666.0 617.8,666.0 610.0,672.5" fill="#c4c0a4" />
<polygon points="582.0,697.9 585.9,685.5 595.7,680.6 606.1,685.5 609.3,697.9" fill="#343c2e" />
<polygon points="587.9,697.9 591.1,688.1 597.0,685.5 598.3,697.9" fill="#444c3a" />
<polygon points="603.5,673.8 611.3,670.6 618.4,675.8 617.1,685.5 609.3,689.4 604.8,682.9" fill="#6b492a" />
<polygon points="608.0,676.4 612.6,674.5 614.1,680.3 610.0,682.3" fill="#8a6038" />
<polygon points="621.4,666.0 625.8,666.0 625.2,678.4 621.4,679.3" fill="#a8661c" />
<polygon points="625.8,678.4 641.2,674.9 641.2,680.6 632.1,684.5 623.2,687.1" fill="#a5641c" />
<polygon points="614.1,686.8 623.0,681.6 623.6,687.5 615.2,692.0" fill="#8a5420" />
<polygon points="622.3,697.9 624.0,691.0 641.2,685.5 641.2,697.9" fill="#6a3413" />
<polygon points="628.4,697.9 629.5,692.7 634.7,691.0 634.0,697.9" fill="#8a4a1a" />
</g>
<polygon points="454.7,666.0 466.1,666.0 466.1,698.5 454.7,698.5" fill="#3e3e4e" />
<polygon points="465.3,667.1 455.5,681.9 465.3,697.0" fill="#9a9aaa" />
</g>
</g></svg><!--/THUMBS-->
<!--WAVE--><svg class="abs" style="left:0;top:0" width="640" height="772"><path d="M104 767.8L104.0 766.5L104.8 766.5L105.5 766.4L106.2 747.6L107.0 736.7L107.8 736.7L108.5 743.1L109.2 749.0L110.0 750.4L110.8 750.1L111.5 751.8L112.2 755.5L113.0 758.4L113.8 760.5L114.5 762.1L115.2 756.4L116.0 745.1L116.8 745.1L117.5 748.4L118.2 753.0L119.0 756.4L119.8 752.4L120.5 747.6L121.2 747.6L122.0 752.4L122.8 756.0L123.5 758.7L124.2 760.7L125.0 754.1L125.8 753.4L126.5 754.6L127.2 757.7L128.0 759.9L128.8 761.7L129.5 763.0L130.2 763.9L131.0 758.3L131.8 744.2L132.5 744.2L133.2 746.7L134.0 751.8L134.8 755.5L135.5 756.8L136.2 756.8L137.0 759.2L137.8 761.1L138.5 762.5L139.2 763.6L140.0 764.4L140.8 765.0L141.5 765.4L142.2 765.8L143.0 766.0L143.8 754.2L144.5 744.2L145.2 744.2L146.0 748.4L146.8 753.0L147.5 756.4L148.2 759.0L149.0 761.0L149.8 762.4L150.5 752.4L151.2 743.4L152.0 743.4L152.8 748.2L153.5 752.8L154.2 756.3L155.0 759.0L155.8 760.9L156.5 762.4L157.2 763.5L158.0 752.8L158.8 743.4L159.5 743.4L160.2 748.0L161.0 752.7L161.8 756.3L162.5 756.6L163.2 755.1L164.0 755.7L164.8 758.5L165.5 760.6L166.2 754.4L167.0 742.6L167.8 742.6L168.5 746.6L169.2 751.6L170.0 755.4L170.8 758.3L171.5 751.3L172.2 745.1L173.0 745.1L173.8 750.2L174.5 754.4L175.2 757.5L176.0 759.8L176.8 758.4L177.5 757.6L178.2 758.3L179.0 760.4L179.8 762.0L180.5 763.2L181.2 764.1L182.0 764.8L182.8 765.3L183.5 761.6L184.2 749.6L185.0 747.6L185.8 748.8L186.5 753.3L187.2 756.7L188.0 759.2L188.8 753.9L189.5 739.2L190.2 739.2L191.0 743.3L191.8 749.2L192.5 753.6L193.2 756.9L194.0 759.4L194.8 761.2L195.5 755.5L196.2 745.1L197.0 745.1L197.8 748.7L198.5 753.2L199.2 756.6L200.0 750.9L200.8 746.7L201.5 747.1L202.2 752.1L203.0 755.8L203.8 758.5L204.5 755.5L205.2 736.2L206.0 735.9L206.8 739.1L207.5 746.1L208.2 751.3L209.0 750.4L209.8 740.9L210.5 740.9L211.2 746.3L212.0 751.4L212.8 755.3L213.5 756.2L214.2 755.1L215.0 755.9L215.8 758.6L216.5 760.7L217.2 752.2L218.0 740.1L218.8 740.1L219.5 744.8L220.2 750.3L221.0 754.4L221.8 751.8L222.5 748.4L223.2 749.0L224.0 753.4L224.8 756.8L225.5 759.3L226.2 761.2L227.0 762.6L227.8 754.2L228.5 753.4L229.2 754.6L230.0 757.6L230.8 759.9L231.5 761.7L232.2 762.9L233.0 763.9L233.8 764.6L234.5 760.0L235.2 745.9L236.0 744.2L236.8 746.0L237.5 751.2L238.2 755.1L239.0 758.0L239.8 755.1L240.5 755.1L241.2 757.3L242.0 759.7L242.8 761.5L243.5 762.8L244.2 763.8L245.0 764.5L245.8 765.1L246.5 765.5L247.2 754.7L248.0 741.7L248.8 741.7L249.5 745.6L250.2 750.9L251.0 754.9L251.8 757.9L252.5 760.1L253.2 749.0L254.0 737.6L254.8 737.6L255.5 743.4L256.2 749.3L257.0 753.7L257.8 757.0L258.5 759.4L259.2 761.3L260.0 746.2L260.8 735.9L261.5 735.9L262.2 742.7L263.0 748.8L263.8 753.3L264.5 755.9L265.2 755.1L266.0 756.1L266.8 758.8L267.5 760.8L268.2 762.3L269.0 763.4L269.8 756.6L270.5 743.4L271.2 743.4L272.0 746.5L272.8 751.6L273.5 749.3L274.2 744.2L275.0 744.5L275.8 750.1L276.5 754.3L277.2 757.4L278.0 759.8L278.8 761.5L279.5 754.7L280.2 753.4L281.0 754.3L281.8 757.5L282.5 759.8L283.2 761.6L284.0 762.9L284.8 763.9L285.5 759.5L286.2 746.0L287.0 745.1L287.8 747.1L288.5 752.0L289.2 755.7L290.0 758.5L290.8 760.6L291.5 752.6L292.2 735.9L293.0 735.9L293.8 740.3L294.5 747.0L295.2 751.9L296.0 755.7L296.8 758.4L297.5 760.5L298.2 762.1L299.0 753.8L299.8 737.6L300.5 737.6L301.2 741.6L302.0 747.9L302.8 752.6L303.5 756.2L304.2 758.8L305.0 751.5L305.8 740.1L306.5 740.1L307.2 745.0L308.0 750.5L308.8 754.6L309.5 757.6L310.2 759.9L311.0 761.7L311.8 749.0L312.5 738.4L313.2 738.4L314.0 744.3L314.8 749.9L315.5 754.1L316.2 757.3L317.0 759.2L317.8 757.6L318.5 757.9L319.2 760.1L320.0 761.8L320.8 763.1L321.5 758.5L322.2 745.9L323.0 745.9L323.8 748.4L324.5 753.0L325.2 756.5L326.0 759.1L326.8 761.0L327.5 762.4L328.2 763.5L329.0 764.4L329.8 763.2L330.5 755.8L331.2 755.1L332.0 756.1L332.8 758.8L333.5 760.8L334.2 762.3L335.0 763.4L335.8 754.7L336.5 739.2L337.2 739.2L338.0 742.9L338.8 748.9L339.5 753.4L340.2 756.8L341.0 759.3L341.8 755.1L342.5 755.1L343.2 757.6L344.0 759.9L344.8 761.6L345.5 762.9L346.2 763.9L347.0 764.6L347.8 765.2L348.5 765.6L349.2 753.5L350.0 742.6L350.8 742.6L351.5 746.9L352.2 751.9L353.0 755.6L353.8 758.4L354.5 760.5L355.2 762.1L356.0 763.3L356.8 756.6L357.5 747.6L358.2 747.6L359.0 750.9L359.8 754.9L360.5 757.9L361.2 760.1L362.0 761.8L362.8 750.8L363.5 742.6L364.2 742.6L365.0 747.9L365.8 752.6L366.5 756.2L367.2 758.8L368.0 760.8L368.8 753.7L369.5 750.1L370.2 750.4L371.0 754.5L371.8 757.6L372.5 759.9L373.2 761.6L374.0 762.9L374.8 755.8L375.5 752.8L376.2 753.0L377.0 756.5L377.8 759.1L378.5 761.0L379.2 762.5L380.0 763.5L380.8 764.4L381.5 751.8L382.2 740.8L383.0 740.8L383.8 745.7L384.5 751.0L385.2 755.0L386.0 754.9L386.8 754.8L387.5 756.1L388.2 758.8L389.0 760.8L389.8 762.3L390.5 763.4L391.2 764.3L392.0 750.0L392.8 737.8L393.5 737.8L394.2 743.3L395.0 749.2L395.8 753.6L396.5 746.9L397.2 746.8L398.0 748.9L398.8 753.4L399.5 756.8L400.2 759.3L401.0 761.2L401.8 762.6L402.5 763.6L403.2 764.4L404.0 761.0L404.8 756.8L405.5 756.8L406.2 758.7L407.0 760.7L407.8 762.2L408.5 763.4L409.2 764.2L410.0 764.9L410.8 765.4L411.5 764.2L412.2 754.2L413.0 750.8L413.8 751.1L414.5 755.0L415.2 758.0L416.0 759.9L416.8 754.8L417.5 754.8L418.2 757.1L419.0 759.5L419.8 761.3L420.5 762.7L421.2 763.7L422.0 764.5L422.8 757.9L423.5 742.9L424.2 742.8L425.0 745.4L425.8 750.7L426.5 754.8L427.2 754.2L428.0 750.8L428.8 751.1L429.5 755.0L430.2 758.0L431.0 750.0L431.8 737.8L432.5 737.8L433.2 743.3L434.0 749.2L434.8 753.6L435.5 756.9L436.2 759.4L437.0 761.2L437.8 762.6L438.5 756.8L439.2 756.8L440.0 757.9L440.8 760.1L441.5 761.8L442.2 763.0L443.0 764.0L443.8 764.7L444.5 749.4L445.2 736.8L446.0 736.8L446.8 742.5L447.5 748.6L448.2 753.1L449.0 750.9L449.8 750.8L450.5 752.5L451.2 756.1L452.0 758.8L452.8 757.2L453.5 740.9L454.2 740.8L455.0 743.6L455.8 749.4L456.5 753.8L457.2 757.0L458.0 759.5L458.8 761.3L459.5 762.7L460.2 763.7L461.0 761.0L461.8 756.8L462.5 756.8L463.2 758.7L464.0 760.7L464.8 762.2L465.5 763.4L466.2 764.2L467.0 764.9L467.8 765.4L468.5 761.9L469.2 743.2L470.0 736.8L470.8 737.3L471.5 744.7L472.2 750.2L473.0 754.4L473.8 757.5L474.5 759.8L475.2 761.6L476.0 761.0L476.8 756.8L477.5 756.8L478.2 758.7L479.0 760.7L479.8 762.2L480.5 763.4L481.2 758.9L482.0 756.8L482.8 757.0L483.5 759.4L484.2 761.3L485.0 762.7L485.8 763.7L486.5 764.5L487.2 765.1L488.0 765.5L488.8 762.7L489.5 755.9L490.2 755.8L491.0 757.0L491.8 759.4L492.5 761.3L493.2 762.7L494.0 756.4L494.8 748.8L495.5 748.8L496.2 752.2L497.0 755.9L497.8 758.6L498.5 760.7L499.2 762.2L500.0 763.3L500.8 761.6L501.5 752.9L502.2 752.8L503.0 754.3L503.8 757.4L504.5 759.8L505.2 761.5L506.0 762.9L506.8 763.8L507.5 764.6L508.2 765.1L509.0 759.9L509.8 754.8L510.5 754.8L511.2 757.1L512.0 759.5L512.8 761.3L513.5 762.7L514.2 763.7L515.0 764.5L515.8 765.1L516.5 763.9L517.2 752.6L518.0 748.8L518.8 749.1L519.5 753.5L520.2 756.9L521.0 759.4L521.8 761.2L522.5 762.6L523.2 763.7L524.0 764.5L524.8 762.7L525.5 755.9L526.2 755.8L527.0 757.0L527.8 759.4L528.5 761.3L529.2 761.6L530.0 752.9L530.8 752.8L531.5 754.3L532.2 757.4L533.0 759.8L533.8 743.2L534.5 736.8L535.2 737.3L536.0 744.7L536.8 750.2L537.5 754.4L538.2 757.5L539.0 759.8L539.8 761.6L540.5 762.9L541.2 757.2L542.0 740.9L542.8 740.8L543.5 743.6L544.2 749.4L545.0 753.8L545.8 757.0L546.5 755.2L547.2 746.8L548.0 746.8L548.8 750.6L549.5 754.6L550.2 756.1L551.0 737.9L551.8 737.8L552.5 740.9L553.2 747.4L554.0 752.3L554.8 755.9L555.5 754.9L556.2 754.8L557.0 756.1L557.8 758.8L558.5 760.8L559.2 762.3L560.0 763.4L560.8 764.3L561.5 764.9L562.2 765.4L563.0 761.0L563.8 756.8L564.5 756.8L565.2 758.7L566.0 760.7L566.8 762.2L567.5 763.4L568.2 764.2L569.0 764.9L569.8 765.4L570.5 764.2L571.2 754.2L572.0 750.8L572.8 751.1L573.5 755.0L574.2 758.0L575.0 760.2L575.8 761.8L576.5 763.1L577.2 764.0L578.0 751.8L578.8 740.8L579.5 740.8L580.2 745.7L581.0 751.0L581.8 755.0L582.5 757.9L583.2 760.1L584.0 761.8L584.8 763.1L585.5 762.9L586.2 747.9L587.0 742.8L587.8 743.2L588.5 749.1L589.2 753.5L590.0 756.9L590.8 759.4L591.5 761.2L592.2 759.4L593.0 746.9L593.8 746.8L594.5 748.9L595.2 753.4L596.0 756.8L596.8 759.3L597.5 761.2L598.2 762.6L599.0 761.9L599.8 743.2L600.5 736.8L601.2 737.3L602.0 744.7L602.8 750.2L603.5 754.4L604.2 757.5L605.0 759.8L605.8 761.6L606.5 755.2L607.2 746.8L608.0 746.8L608.8 750.6L609.5 754.6L610.2 757.7L611.0 760.0L611.8 761.7L612.5 757.5L613.2 750.8L614.0 750.8L614.8 753.8L615.5 757.1L616.2 759.5L617.0 761.3L617.8 762.7L618.5 763.7L619.2 755.8L620.0 752.8L620.8 753.0L621.5 756.5L622.2 759.1L622.500 767.8Z" fill="#1f6659"/></svg><!--/WAVE-->
<!-- scrollbars -->
<div class="abs" style="left:102px;top:823px;width:384px;height:7px;border-radius:4px;background:#8a8a8a"></div>
<div class="abs" style="left:1477px;top:592px;width:7px;height:207px;border-radius:4px;background:#8a8a8a"></div>
<div class="abs" style="left:67px;top:840px;font-size:15px;line-height:18px;color:#a9a9a9;white-space:nowrap;letter-spacing:-.13px">Duración del proyecto: 00:22</div>
<!-- VU -->
<svg class="abs" style="left:0;top:0" width="1616" height="870" font-family="'Liberation Sans',sans-serif" font-size="9.500">
<g fill="#3d3d3d"><rect x="1522" y="582.200" width="9.300" height="2.600" rx="1"/><rect x="1522" y="594.3" width="9.300" height="2.600" rx="1"/><rect x="1522" y="600.2" width="9.300" height="2.600" rx="1"/><rect x="1522" y="606.1" width="9.300" height="2.600" rx="1"/><rect x="1522" y="612.0" width="9.300" height="2.600" rx="1"/><rect x="1522" y="617.9" width="9.300" height="2.600" rx="1"/><rect x="1522" y="623.8" width="9.300" height="2.600" rx="1"/><rect x="1522" y="629.7" width="9.300" height="2.600" rx="1"/><rect x="1522" y="635.6" width="9.300" height="2.600" rx="1"/><rect x="1522" y="641.5" width="9.300" height="2.600" rx="1"/><rect x="1522" y="647.5" width="9.300" height="2.600" rx="1"/><rect x="1522" y="653.4" width="9.300" height="2.600" rx="1"/><rect x="1522" y="659.3" width="9.300" height="2.600" rx="1"/><rect x="1522" y="665.2" width="9.300" height="2.600" rx="1"/><rect x="1522" y="671.1" width="9.300" height="2.600" rx="1"/><rect x="1522" y="677.0" width="9.300" height="2.600" rx="1"/><rect x="1522" y="682.9" width="9.300" height="2.600" rx="1"/><rect x="1522" y="688.8" width="9.300" height="2.600" rx="1"/><rect x="1522" y="694.7" width="9.300" height="2.600" rx="1"/><rect x="1522" y="700.6" width="9.300" height="2.600" rx="1"/><rect x="1522" y="706.5" width="9.300" height="2.600" rx="1"/><rect x="1522" y="712.4" width="9.300" height="2.600" rx="1"/><rect x="1522" y="718.3" width="9.300" height="2.600" rx="1"/><rect x="1522" y="724.2" width="9.300" height="2.600" rx="1"/><rect x="1522" y="730.1" width="9.300" height="2.600" rx="1"/><rect x="1522" y="736.0" width="9.300" height="2.600" rx="1"/><rect x="1522" y="741.9" width="9.300" height="2.600" rx="1"/><rect x="1522" y="747.9" width="9.300" height="2.600" rx="1"/><rect x="1522" y="753.8" width="9.300" height="2.600" rx="1"/><rect x="1522" y="759.7" width="9.300" height="2.600" rx="1"/><rect x="1522" y="765.6" width="9.300" height="2.600" rx="1"/><rect x="1522" y="771.5" width="9.300" height="2.600" rx="1"/><rect x="1522" y="777.4" width="9.300" height="2.600" rx="1"/><rect x="1522" y="783.3" width="9.300" height="2.600" rx="1"/><rect x="1522" y="789.2" width="9.300" height="2.600" rx="1"/><rect x="1522" y="795.1" width="9.300" height="2.600" rx="1"/><rect x="1522" y="801.0" width="9.300" height="2.600" rx="1"/><rect x="1540.5" y="582.200" width="9.300" height="2.600" rx="1"/><rect x="1540.5" y="594.3" width="9.300" height="2.600" rx="1"/><rect x="1540.5" y="600.2" width="9.300" height="2.600" rx="1"/><rect x="1540.5" y="606.1" width="9.300" height="2.600" rx="1"/><rect x="1540.5" y="612.0" width="9.300" height="2.600" rx="1"/><rect x="1540.5" y="617.9" width="9.300" height="2.600" rx="1"/><rect x="1540.5" y="623.8" width="9.300" height="2.600" rx="1"/><rect x="1540.5" y="629.7" width="9.300" height="2.600" rx="1"/><rect x="1540.5" y="635.6" width="9.300" height="2.600" rx="1"/><rect x="1540.5" y="641.5" width="9.300" height="2.600" rx="1"/><rect x="1540.5" y="647.5" width="9.300" height="2.600" rx="1"/><rect x="1540.5" y="653.4" width="9.300" height="2.600" rx="1"/><rect x="1540.5" y="659.3" width="9.300" height="2.600" rx="1"/><rect x="1540.5" y="665.2" width="9.300" height="2.600" rx="1"/><rect x="1540.5" y="671.1" width="9.300" height="2.600" rx="1"/><rect x="1540.5" y="677.0" width="9.300" height="2.600" rx="1"/><rect x="1540.5" y="682.9" width="9.300" height="2.600" rx="1"/><rect x="1540.5" y="688.8" width="9.300" height="2.600" rx="1"/><rect x="1540.5" y="694.7" width="9.300" height="2.600" rx="1"/><rect x="1540.5" y="700.6" width="9.300" height="2.600" rx="1"/><rect x="1540.5" y="706.5" width="9.300" height="2.600" rx="1"/><rect x="1540.5" y="712.4" width="9.300" height="2.600" rx="1"/><rect x="1540.5" y="718.3" width="9.300" height="2.600" rx="1"/><rect x="1540.5" y="724.2" width="9.300" height="2.600" rx="1"/><rect x="1540.5" y="730.1" width="9.300" height="2.600" rx="1"/><rect x="1540.5" y="736.0" width="9.300" height="2.600" rx="1"/><rect x="1540.5" y="741.9" width="9.300" height="2.600" rx="1"/><rect x="1540.5" y="747.9" width="9.300" height="2.600" rx="1"/><rect x="1540.5" y="753.8" width="9.300" height="2.600" rx="1"/><rect x="1540.5" y="759.7" width="9.300" height="2.600" rx="1"/><rect x="1540.5" y="765.6" width="9.300" height="2.600" rx="1"/><rect x="1540.5" y="771.5" width="9.300" height="2.600" rx="1"/><rect x="1540.5" y="777.4" width="9.300" height="2.600" rx="1"/><rect x="1540.5" y="783.3" width="9.300" height="2.600" rx="1"/><rect x="1540.5" y="789.2" width="9.300" height="2.600" rx="1"/><rect x="1540.5" y="795.1" width="9.300" height="2.600" rx="1"/><rect x="1540.5" y="801.0" width="9.300" height="2.600" rx="1"/></g>
<g fill="#8c8c8c"><text x="1512" y="598.9" text-anchor="end">0</text><text x="1512" y="624.3" text-anchor="end">-5</text><text x="1512" y="650.9" text-anchor="end">-10</text><text x="1512" y="676.5" text-anchor="end">-15</text><text x="1512" y="702.7" text-anchor="end">-20</text><text x="1512" y="732.1" text-anchor="end">-30</text><text x="1512" y="761.2" text-anchor="end">-40</text><text x="1512" y="791.5" text-anchor="end">-50</text><text x="1512" y="807.5" text-anchor="end">-60</text></g><g fill="#6a6a6a"><rect x="1516" y="594.8" width="1.400" height="1.400"/><rect x="1516" y="620.2" width="1.400" height="1.400"/><rect x="1516" y="646.8" width="1.400" height="1.400"/><rect x="1516" y="672.4" width="1.400" height="1.400"/><rect x="1516" y="698.6" width="1.400" height="1.400"/><rect x="1516" y="728.0" width="1.400" height="1.400"/><rect x="1516" y="757.1" width="1.400" height="1.400"/><rect x="1516" y="787.4" width="1.400" height="1.400"/><rect x="1516" y="803.4" width="1.400" height="1.400"/></g>
<g fill="#7c7c7c" font-size="9"><text x="1526.200" y="825.600" text-anchor="middle">L</text><text x="1544.600" y="825.600" text-anchor="middle">R</text></g>
<g fill="#313131"><rect x="1525.500" y="839.0" width="10" height="2"/><rect x="1537.500" y="839.0" width="10" height="2"/><rect x="1525.500" y="842.5" width="10" height="2"/><rect x="1537.500" y="842.5" width="10" height="2"/><rect x="1525.500" y="846.0" width="10" height="2"/><rect x="1537.500" y="846.0" width="10" height="2"/><rect x="1525.500" y="849.5" width="10" height="2"/><rect x="1537.500" y="849.5" width="10" height="2"/><rect x="1525.500" y="853.0" width="10" height="2"/><rect x="1537.500" y="853.0" width="10" height="2"/><rect x="1525.500" y="856.5" width="10" height="2"/><rect x="1537.500" y="856.5" width="10" height="2"/></g>
<rect x="1510" y="836" width="1.200" height="24" fill="#2e2e2e"/>
</svg>
<!-- playhead -->
<div class="abs" style="left:322.400px;top:556px;width:1.800px;height:265px;background:#e4721f"></div>
<svg class="abs" style="left:315px;top:543px" width="17" height="18"><path d="M2.500 2.200h11.600c.8 0 1.200.8.800 1.500L9.100 15.200c-.4.700-1.200.7-1.600 0L1.700 3.700c-.4-.7 0-1.500.8-1.500z" fill="#5e3c24" stroke="#e4721f" stroke-width="2" stroke-linejoin="round"/></svg>
<!-- CALLOUTS -->
<svg class="abs" style="left:0;top:0;filter:drop-shadow(0 9px 20px rgba(0,0,0,.5))" width="1616" height="940" font-family="'Liberation Sans',sans-serif" font-weight="bold" fill="#fff">
<path d="M190 182h340.300a24 24 0 0 1 24 24v73.800a24 24 0 0 1-24 24H190a24 24 0 0 1-24-24v-17.800l-19.300-16.300q-1.400-1.200 0-2.400L166 227v-21a24 24 0 0 1 24-24z" fill="#0033f5"/>
<text x="200.500" y="262" font-size="50.700" textLength="321" lengthAdjust="spacingAndGlyphs">Transiciones</text>
<path d="M499.700 372.200H673l14.600-18.300q1-1.200 2 0l15.800 18.300H880a24 24 0 0 1 24 24v63a24 24 0 0 1-24 24H499.700a24 24 0 0 1-24-24v-63a24 24 0 0 1 24-24z" fill="#0033f5"/>
<text x="507" y="446.200" font-size="45.600" textLength="367" lengthAdjust="spacingAndGlyphs">Añadir archivos</text>
<path d="M448 554.500h224.300l14.900-18.700q1-1.200 2 0l16 18.700H930a24 24 0 0 1 24 24v62.800a24 24 0 0 1-24 24H448a24 24 0 0 1-24-24v-62.800a24 24 0 0 1 24-24z" fill="#0033f5"/>
<text x="454.500" y="628.500" font-size="46.400" textLength="468" lengthAdjust="spacingAndGlyphs">Recorte automático</text>
</svg>
</div>
</body>
</html>
